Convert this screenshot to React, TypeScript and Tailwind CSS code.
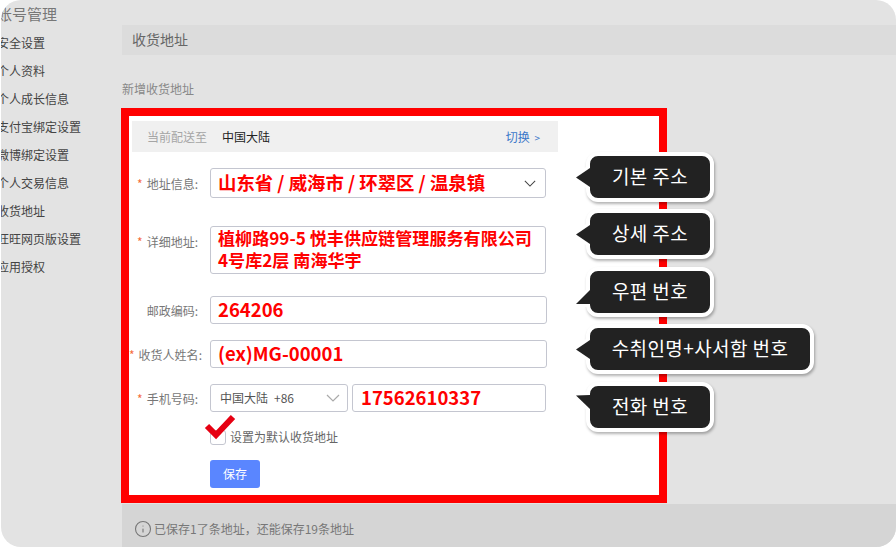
import React from 'react';
import { Info } from 'lucide-react';

const sideItems = ['安全设置', '个人资料', '个人成长信息', '支付宝绑定设置', '微博绑定设置', '个人交易信息', '收货地址', '旺旺网页版设置', '应用授权'];

const Chevron = ({ className }: { className: string }) => (
    <svg viewBox="0 0 14 8" className={className} fill="none" stroke="currentColor" strokeWidth={1.2}>
        <path d="M1 1l6 6 6-6" />
    </svg>
);

const Label = ({ text, star = true, className = '' }: { text: string; star?: boolean; className?: string }) => (
    <div className={`w-[69px] shrink-0 pt-[2px] text-right text-[12px] leading-[18px] text-[#777] whitespace-nowrap ${className}`}>
        {star && <span className="text-[#f56c3c] mr-[4px]">*</span>}
        {text}:
    </div>
);

interface CalloutProps {
    text: string;
    className: string;
    base: [number, number];
    tip: number;
}

// dark speech bubble with a white outline, the tail sits on its left edge
const Callout: React.FC<CalloutProps> = ({ text, className, base, tip }) => {
    const at = (y: number) => tip + (y - tip) * (11 / 14);
    return (
        <div className={`absolute h-[50px] pb-[1px] flex items-center justify-center rounded-[12px] border-4 border-white bg-[#222] text-white text-[19px] tracking-[0.4px] shadow-[1px_2px_3px_rgba(0,0,0,0.3)] ${className}`}>
            {text}
            <svg className="absolute -left-[16px] top-0 overflow-visible" width="20" height="42" viewBox="0 0 20 42">
                <polygon points={`13,${at(base[0])} 2,${tip} 13,${at(base[1])}`} fill="white" stroke="white" strokeWidth="6" strokeLinejoin="miter" />
                <polygon points={`16,${base[0]} 2,${tip} 16,${base[1]} 18,${base[1]} 18,${base[0]}`} fill="#222" />
            </svg>
        </div>
    );
};

export default function App() {
    return (
        <div className="relative w-[896px] h-[547px] bg-white overflow-hidden font-['Noto_Sans_CJK_SC','Noto_Sans_CJK_KR',sans-serif]">
            <div className="ml-px h-full rounded-[20px] bg-[#e3e3e3] overflow-hidden flex">
                <aside className="w-[125px] shrink-0 -ml-[4px]">
                    <div className="mt-[4px] text-[15px] leading-[20px] text-[#777]">账号管理</div>
                    <ul className="mt-[5px] text-[12px] leading-[28px] text-[#444]">
                        {sideItems.map(item => (
                            <li key={item} className="whitespace-nowrap">{item}</li>
                        ))}
                    </ul>
                </aside>

                <main className="flex-1 flex flex-col min-w-0">
                    <div className="mt-[25px] h-[30px] pl-[10px] pb-[2px] flex items-center bg-[#dcdcdc] text-[14px] text-[#666]">收货地址</div>
                    <div className="mt-[25px] text-[12px] leading-[18px] text-[#888]">新增收货地址</div>

                    <section className="relative mt-[10px] -ml-px w-[546px] h-[395px] border-8 border-[#ff0000] bg-white">
                        <div className="mt-[5px] ml-[3px] w-[426px] h-[31px] pl-[15px] pr-[18px] flex items-center bg-[#f0f0f0] text-[12px]">
                            <span className="text-[#a5a5a5]">当前配送至</span>
                            <span className="ml-[15px] text-[#222]">中国大陆</span>
                            <span className="ml-auto text-[#3a77c9]">切换 <span className="ml-[2px] text-[10px]">&gt;</span></span>
                        </div>

                        <div className="mt-[16px] flex items-center">
                            <Label text="地址信息" />
                            <div className="ml-[12px] w-[336px] h-[30px] pl-[7px] pr-[9px] flex items-center justify-between rounded-[3px] border border-[#c4c6d0] text-[18.4px] font-bold text-[#ff0000] whitespace-nowrap">
                                山东省 / 威海市 / 环翠区 / 温泉镇
                                <Chevron className="w-[12px] h-[7px] text-[#444]" />
                            </div>
                        </div>

                        <div className="mt-[28px] flex items-center">
                            <Label text="详细地址" className="-mt-[18px]" />
                            <div className="ml-[12px] w-[336px] h-[48px] pl-[7px] rounded-[3px] border border-[#c4c6d0] text-[17.1px] leading-[22px] font-bold text-[#ff0000] whitespace-nowrap">
                                植柳路99-5 悦丰供应链管理服务有限公司<br />4号库2层 南海华宇
                            </div>
                        </div>

                        <div className="mt-[22px] flex items-center">
                            <Label text="邮政编码" star={false} />
                            <div className="ml-[12px] w-[337px] h-[28px] pl-[7px] flex items-center rounded-[3px] border border-[#c4c6d0] text-[18.5px] font-bold text-[#ff0000]">264206</div>
                        </div>

                        <div className="mt-[16px] flex items-center">
                            <Label text="收货人姓名" />
                            <div className="ml-[12px] w-[337px] h-[28px] pl-[7px] flex items-center rounded-[3px] border border-[#c4c6d0] text-[18.5px] font-bold text-[#ff0000]">(ex)MG-00001</div>
                        </div>

                        <div className="mt-[16px] flex items-center">
                            <Label text="手机号码" />
                            <div className="ml-[12px] w-[138px] h-[28px] pl-[9px] pr-[7px] flex items-center justify-between rounded-[3px] border border-[#c4c6d0] text-[12px] text-[#555] whitespace-nowrap">
                                <span>中国大陆<span className="ml-[6px]">+86</span></span>
                                <Chevron className="w-[14px] h-[8px] text-[#aaa]" />
                            </div>
                            <div className="ml-[4px] w-[194px] h-[28px] pl-[8px] flex items-center rounded-[3px] border border-[#c4c6d0] text-[18.5px] font-bold text-[#ff0000]">17562610337</div>
                        </div>

                        <div className="relative mt-[16px] ml-[81px] flex items-center">
                            <span className="w-[16px] h-[15px] rounded-[3px] border border-[#c4c6d0]" />
                            <span className="ml-[4px] text-[12px] text-[#666]">设置为默认收货地址</span>
                            <svg className="absolute -left-[5px] -top-[12px] overflow-visible" width="30" height="24" viewBox="0 0 30 24" fill="none" stroke="#e60012" strokeWidth="6">
                                <path d="M2 10l9 9L28 1" />
                            </svg>
                        </div>

                        <button className="mt-[14px] ml-[81px] block w-[50px] h-[28px] rounded-[3px] bg-[#5a86ff] text-[12px] text-white">保存</button>
                    </section>

                    <div className="mt-[1px] flex-1 pl-[12px] pt-[6px] flex items-center gap-[2px] bg-[#d5d5d5] text-[12px] text-[#777]">
                        <Info className="w-[18px] h-[18px]" strokeWidth={1.5} />
                        已保存1了条地址，还能保存19条地址
                    </div>
                </main>
            </div>

            <div className="font-['Noto_Sans_CJK_KR',sans-serif]">
                <Callout text="기본 주소" className="left-[586px] top-[152px] w-[128px]" base={[12, 31]} tip={21.5} />
                <Callout text="상세 주소" className="left-[586px] top-[209px] w-[128px]" base={[12, 31]} tip={21.5} />
                <Callout text="우편 번호" className="left-[586px] top-[267px] w-[128px]" base={[19, 33]} tip={33} />
                <Callout text="수취인명+사서함 번호" className="left-[586px] top-[324px] w-[228px]" base={[12, 31]} tip={21.5} />
                <Callout text="전화 번호" className="left-[586px] top-[382px] w-[128px]" base={[9, 23]} tip={9.5} />
            </div>
        </div>
    );
}
